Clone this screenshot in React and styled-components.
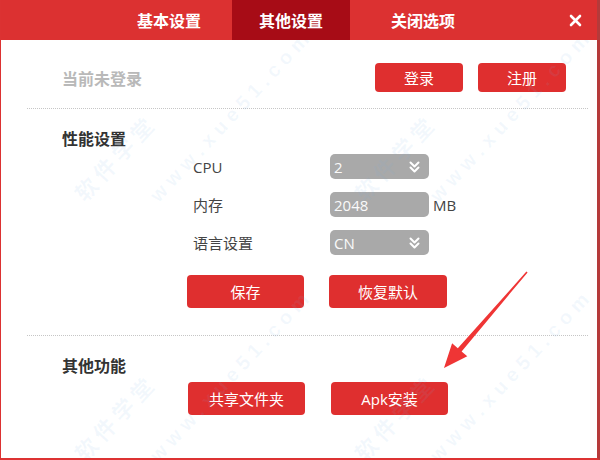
import React from "react";
import styled, { createGlobalStyle } from "styled-components";

const GlobalStyle = createGlobalStyle`
    html, body {
        margin: 0;
        padding: 0;
        background: #ffffff;
    }
    body {
        font-family: "Open Sans", "Noto Sans CJK SC", sans-serif;
    }
`;

const tabs = [
    { label: "基本设置", width: 122 },
    { label: "其他设置", width: 118, active: true },
    { label: "关闭选项", width: 150 },
];

const perfRows = [
    { label: "CPU", value: "2", select: true },
    { label: "内存", value: "2048", unit: "MB" },
    { label: "语言设置", value: "CN", select: true },
];

// faint site watermark stamped over the body
const marks = [
    { x: 40, y: 40 },
    { x: 320, y: 40 },
    { x: 40, y: 300 },
    { x: 320, y: 300 },
];

const DoubleChevron = () => (
    <svg width="11" height="12" viewBox="0 0 11 12" fill="none">
        <polyline points="1.5,1.5 5.5,5.5 9.5,1.5" stroke="#ffffff" strokeWidth="2" strokeLinecap="round" strokeLinejoin="round" />
        <polyline points="1.5,6.5 5.5,10.5 9.5,6.5" stroke="#ffffff" strokeWidth="2" strokeLinecap="round" strokeLinejoin="round" />
    </svg>
);

const App = () => {
    return (
        <>
            <GlobalStyle />
            <Window>
                <Header>
                    <TabSpacer />
                    {tabs.map(tab => (
                        <Tab key={tab.label} $width={tab.width} $active={tab.active}>
                            {tab.label}
                        </Tab>
                    ))}
                    <CloseButton aria-label="关闭">
                        <svg width="13" height="13" viewBox="0 0 13 13">
                            <path d="M2 2 L11 11 M11 2 L2 11" stroke="#ffffff" strokeWidth="2.6" strokeLinecap="round" />
                        </svg>
                    </CloseButton>
                </Header>

                <Body>
                    {marks.map((m, i) => (
                        <Watermark key={i} style={{ left: m.x, top: m.y }}>
                            <span className="cn">软 件 学 堂</span>
                            <span className="url">w w w . x u e 5 1 . c o m</span>
                        </Watermark>
                    ))}

                    <LoginRow>
                        <LoginState>当前未登录</LoginState>
                        <ButtonGroup>
                            <RedButton $w={88} $h={29}>登录</RedButton>
                            <RedButton $w={88} $h={29}>注册</RedButton>
                        </ButtonGroup>
                    </LoginRow>

                    <Divider />

                    <Section>
                        <SectionTitle>性能设置</SectionTitle>
                        <FormGrid>
                            {perfRows.map(row => (
                                <React.Fragment key={row.label}>
                                    <FieldLabel>{row.label}</FieldLabel>
                                    <Field>
                                        <SelectBox>
                                            <span>{row.value}</span>
                                            {row.select && <DoubleChevron />}
                                        </SelectBox>
                                        {row.unit && <Unit>{row.unit}</Unit>}
                                    </Field>
                                </React.Fragment>
                            ))}
                        </FormGrid>
                        <ActionRow $left={125} $gap={25}>
                            <RedButton $w={117} $h={33}>保存</RedButton>
                            <RedButton $w={118} $h={33}>恢复默认</RedButton>
                        </ActionRow>
                    </Section>

                    <Divider $top={27} />

                    <Section>
                        <SectionTitle>其他功能</SectionTitle>
                        <ActionRow $left={126} $gap={26} $top={7}>
                            <RedButton $w={117} $h={33}>共享文件夹</RedButton>
                            <RedButton $w={117} $h={33}>Apk安装</RedButton>
                        </ActionRow>
                    </Section>
                </Body>

                <Arrow width="600" height="460" viewBox="0 0 600 460">
                    <polygon
                        points="527.6,272.4 461.6,351.4 467.3,356.3 444,368 452.1,343.3 457.8,348.2 526.4,271.6"
                        fill="#ef3535"
                    />
                </Arrow>
            </Window>
        </>
    );
};

const Window = styled.div`
    position: relative;
    width: 600px;
    height: 460px;
    box-sizing: border-box;
    border-left: 1px solid #dc3232;
    border-right: 3px solid #b53a3a;
    border-bottom: 2px solid #dd3333;
    background: #ffffff;
    display: flex;
    flex-direction: column;
    overflow: hidden;
`;

const Header = styled.div`
    height: 40px;
    flex-shrink: 0;
    background: #dc3131;
    display: flex;
    align-items: stretch;
`;

const TabSpacer = styled.div`
    width: 109px;
`;

const Tab = styled.div`
    width: ${p => p.$width}px;
    display: flex;
    align-items: center;
    justify-content: center;
    padding-right: ${p => (p.$active ? 0 : 4)}px;
    box-sizing: border-box;
    background: ${p => (p.$active ? "#a70c16" : "transparent")};
    color: #ffffff;
    font-family: "Noto Sans CJK SC", sans-serif;
    font-size: 16px;
    font-weight: 700;
    cursor: pointer;
`;

const CloseButton = styled.div`
    margin-left: auto;
    width: 40px;
    display: flex;
    align-items: center;
    justify-content: center;
    padding-right: 2px;
    cursor: pointer;
`;

const Body = styled.div`
    position: relative;
    flex: 1;
    overflow: hidden;
    display: flex;
    flex-direction: column;
    padding-top: 23px;
`;

const LoginRow = styled.div`
    height: 29px;
    display: flex;
    align-items: center;
    justify-content: space-between;
    padding: 0 31px 0 61px;
`;

const LoginState = styled.div`
    font-family: "Noto Sans CJK SC", sans-serif;
    font-size: 16px;
    font-weight: 700;
    color: #b9b9b9;
`;

const ButtonGroup = styled.div`
    display: flex;
    gap: 15px;
`;

const RedButton = styled.div`
    width: ${p => p.$w}px;
    height: ${p => p.$h}px;
    border-radius: 4px;
    background: #df2f2f;
    color: #ffffff;
    font-family: "Open Sans", "Noto Sans CJK SC", sans-serif;
    font-size: 15px;
    display: flex;
    align-items: center;
    justify-content: center;
    cursor: pointer;
`;

const Divider = styled.div`
    margin: ${p => p.$top ?? 16}px 9px 0 26px;
    border-top: 1px dotted #c6c6c6;
`;

const Section = styled.div`
    display: flex;
    flex-direction: column;
    padding: 19px 0 0 61px;
`;

const SectionTitle = styled.div`
    font-family: "Noto Sans CJK SC", sans-serif;
    font-size: 16px;
    font-weight: 700;
    line-height: 20px;
    color: #333333;
`;

const FormGrid = styled.div`
    display: grid;
    grid-template-columns: 137px auto;
    grid-auto-rows: 25px;
    row-gap: 13px;
    margin: 6px 0 0 131px;
`;

const FieldLabel = styled.div`
    display: flex;
    align-items: center;
    font-family: "Open Sans", "Noto Sans CJK SC", sans-serif;
    font-size: 15px;
    color: #444444;
`;

const Field = styled.div`
    display: flex;
    align-items: center;
    gap: 4px;
`;

const SelectBox = styled.div`
    width: 99px;
    height: 25px;
    box-sizing: border-box;
    border-radius: 5px;
    background: #a9a9a9;
    color: #fafafa;
    font-family: "Open Sans", sans-serif;
    font-size: 15px;
    display: flex;
    align-items: center;
    justify-content: space-between;
    padding: 0 9px 0 4px;
`;

const Unit = styled.div`
    font-family: "Open Sans", sans-serif;
    font-size: 15px;
    color: #444444;
`;

const ActionRow = styled.div`
    display: flex;
    gap: ${p => p.$gap}px;
    margin: ${p => p.$top ?? 20}px 0 0 ${p => p.$left}px;
`;

const Watermark = styled.div`
    position: absolute;
    display: flex;
    flex-direction: column;
    gap: 30px;
    transform: rotate(-47deg);
    transform-origin: left top;
    pointer-events: none;
    font-family: "Noto Sans CJK SC", sans-serif;
    color: rgba(120, 175, 230, 0.09);
    white-space: nowrap;

    .cn {
        font-size: 22px;
        font-weight: 700;
        margin-left: -60px;
        margin-top: 90px;
    }

    .url {
        font-family: "Liberation Sans", sans-serif;
        font-size: 20px;
        font-weight: 700;
        margin-left: -10px;
    }
`;

const Arrow = styled.svg`
    position: absolute;
    left: -1px;
    top: 0;
    pointer-events: none;
`;

export default App;
